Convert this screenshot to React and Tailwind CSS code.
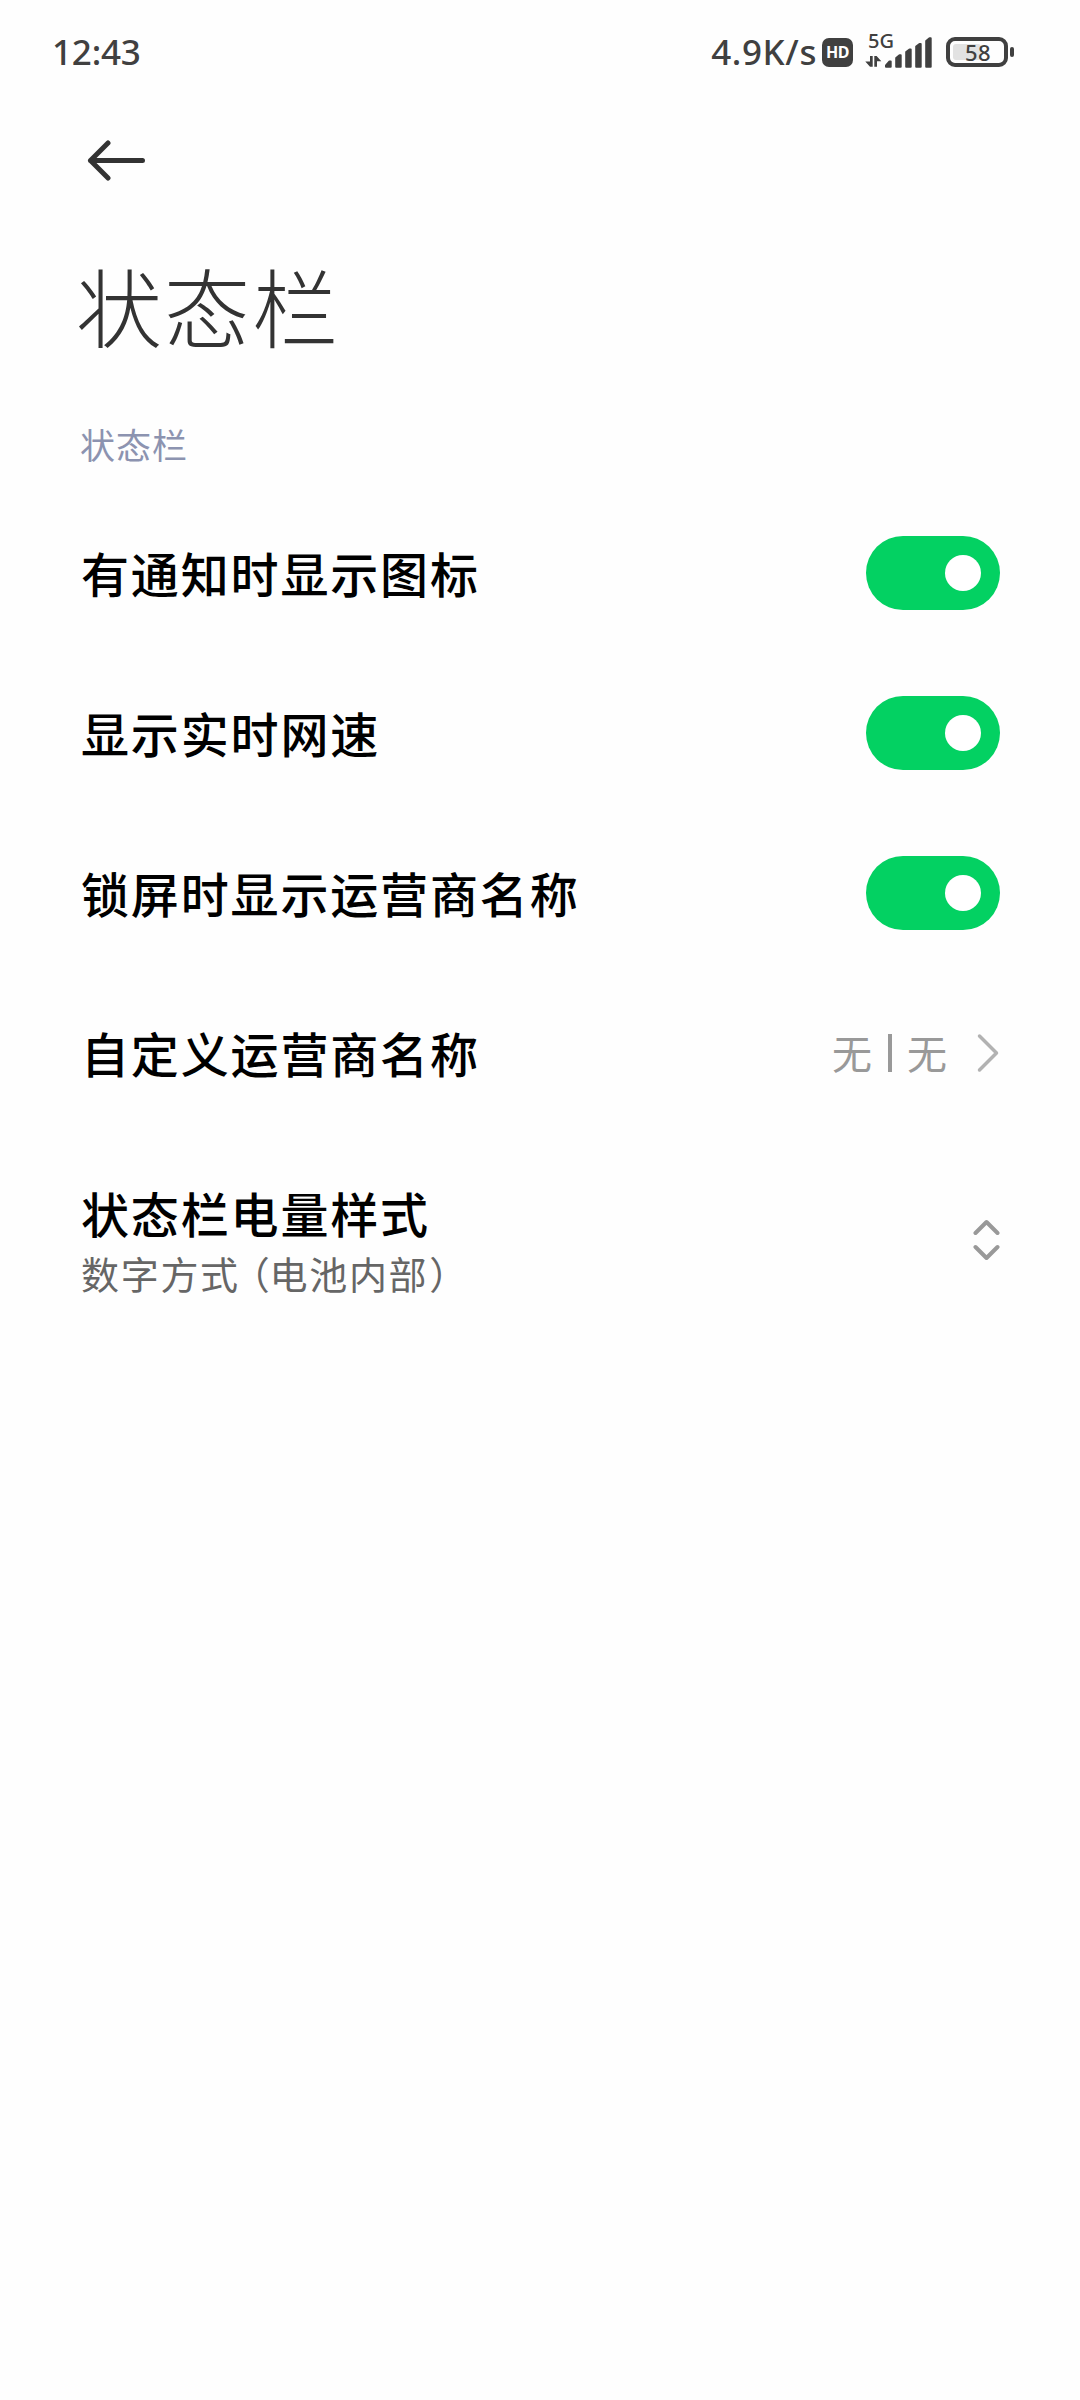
import React, { useState } from "react";

const StatusBar = () => {
  return (
    <div className="h-[104px] pl-[52px] pr-[66px] flex items-center justify-between text-[#404040] font-['Noto_Sans'] font-medium">
      <span className="pb-px text-[35px] leading-none tracking-[-0.2px]">12:43</span>

      <div className="flex items-center">
        <span className="pb-px text-[35px] leading-none tracking-[0.600px]">4.9K/s</span>

        {/* HD badge */}
        <span className="ml-[5px] w-[31px] h-[29px] rounded-[7px] bg-[#404040] text-white text-[16px] font-bold leading-none tracking-[-0.5px] flex items-center justify-center">
          HD
        </span>

        {/* Signal */}
        <svg className="ml-[11px]" width="70" height="56" viewBox="0 -10 70 56" fill="#404040">
          <text x="4" y="14" fontSize="20" fontWeight="500" fontFamily="Noto Sans">5G</text>
          <path d="M6 22H8.700V32.700H6L1.300 27.500H6ZM10.300 22H12.600L17.300 27.300H13V32.700H10.300Z" />
          <g stroke="#404040" strokeWidth="2" strokeLinejoin="round">
            <path d="M22 32.700V31.500L25.500 27.500H26.700V32.700Z" />
            <path d="M32.200 32.700V24L35.500 21.300H36.700V32.700Z" />
            <path d="M42.200 32.700V18L45.500 15.500H46.700V32.700Z" />
            <path d="M52.200 32.700V12.500L55.500 10H56.700V32.700Z" />
            <path d="M62.200 32.700V7L65.500 4.300H66.700V32.700Z" />
          </g>
        </svg>

        {/* Battery */}
        <div className="ml-[12px] flex items-center">
          <div className="relative w-[62px] h-[30px] border-[4px] border-[#404040] rounded-[9px] p-[3px]">
            <div className="w-[28px] h-full rounded-[3px] bg-[#e2e2e2]" />
            <span className="absolute inset-0 pl-0.5 flex items-center justify-center text-[22px] leading-none tracking-[0.5px]">58</span>
          </div>
          <div className="ml-[2px] w-[4px] h-[10px] rounded-[2px] bg-[#404040]" />
        </div>
      </div>
    </div>
  );
};

const Toggle = ({ checked, onChange }) => {
  return (
    <button
      type="button"
      role="switch"
      aria-checked={checked}
      onClick={onChange}
      className={`w-[134px] h-[74px] rounded-full px-[19px] flex items-center ${
        checked ? "bg-[#03d162] justify-end" : "bg-[#e5e5e5] justify-start"
      }`}
    >
      <span className="w-9 h-9 rounded-full bg-white" />
    </button>
  );
};

const Row = ({ title, children }) => {
  return (
    <div className="h-40 flex items-center justify-between">
      <span className="pl-px pb-[3px] text-[48px] leading-none font-medium tracking-[1.850px] text-black">{title}</span>
      {children}
    </div>
  );
};

const switches = [
  { key: "icons", title: "有通知时显示图标" },
  { key: "speed", title: "显示实时网速" },
  { key: "carrier", title: "锁屏时显示运营商名称" },
];

const App = () => {
  const [enabled, setEnabled] = useState({ icons: true, speed: true, carrier: true });

  const toggle = (key) => setEnabled((prev) => ({ ...prev, [key]: !prev[key] }));

  return (
    <div className="w-[1080px] h-[2400px] bg-[#fefefe] overflow-hidden font-['Noto_Sans_CJK_SC',sans-serif]">
      <StatusBar />

      <div className="pl-20 pr-20">
        {/* Header */}
        <div className="h-[112px] pl-[6px] flex items-center">
          <svg width="60" height="42" viewBox="0 0 60 42" fill="none" stroke="#333" strokeWidth="5" strokeLinecap="round" strokeLinejoin="round">
            <path d="M22 4L4.500 21.500L22 39M4.500 21.500H56.500" />
          </svg>
        </div>
        <h1 className="h-[184px] pb-[7px] flex items-center -ml-1 text-[86px] leading-none font-light tracking-[2px] text-[#333]">
          状态栏
        </h1>

        <h2 className="h-[93px] pb-[6px] flex items-center text-[35px] leading-none tracking-[1px] text-[#8c93b0]">状态栏</h2>

        {switches.map((item) => (
          <Row key={item.key} title={item.title}>
            <Toggle checked={enabled[item.key]} onChange={() => toggle(item.key)} />
          </Row>
        ))}

        {/* Custom carrier name */}
        <Row title="自定义运营商名称">
          <div className="flex items-center">
            <span className="flex items-center text-[40px] leading-none text-[#999]">
              <span className="pb-[3px]">无</span>
              <span className="ml-[16px] mr-[15px] w-[4px] h-[38px] bg-[#999]" />
              <span className="pb-[3px]">无</span>
            </span>
            <svg className="ml-[29px]" width="24" height="40" viewBox="0 0 24 40" fill="none" stroke="#b2b2b2" strokeWidth="3.500" strokeLinecap="round" strokeLinejoin="round">
              <path d="M3.500 3L20.500 20L3.500 37" />
            </svg>
          </div>
        </Row>

        {/* Battery style */}
        <div className="h-[214px] flex items-center justify-between">
          <div className="pl-px flex flex-col gap-[18px]">
            <span className="text-[48px] leading-none font-medium tracking-[1.850px] text-black">状态栏电量样式</span>
            <span className="text-[38px] leading-none tracking-[1.700px] text-[#666]">
              数字方式<span className="ml-[11px] -mr-[2px] [font-feature-settings:'halt']">（</span>电池内部<span className="ml-px">）</span>
            </span>
          </div>
          <svg width="28" height="44" viewBox="0 0 28 44" fill="none" stroke="#999" strokeWidth="4" strokeLinecap="round" strokeLinejoin="round">
            <path d="M3.500 15L14.500 4L25.500 15M3.500 29L14.500 40L25.500 29" />
          </svg>
        </div>
      </div>
    </div>
  );
};

export default App;
